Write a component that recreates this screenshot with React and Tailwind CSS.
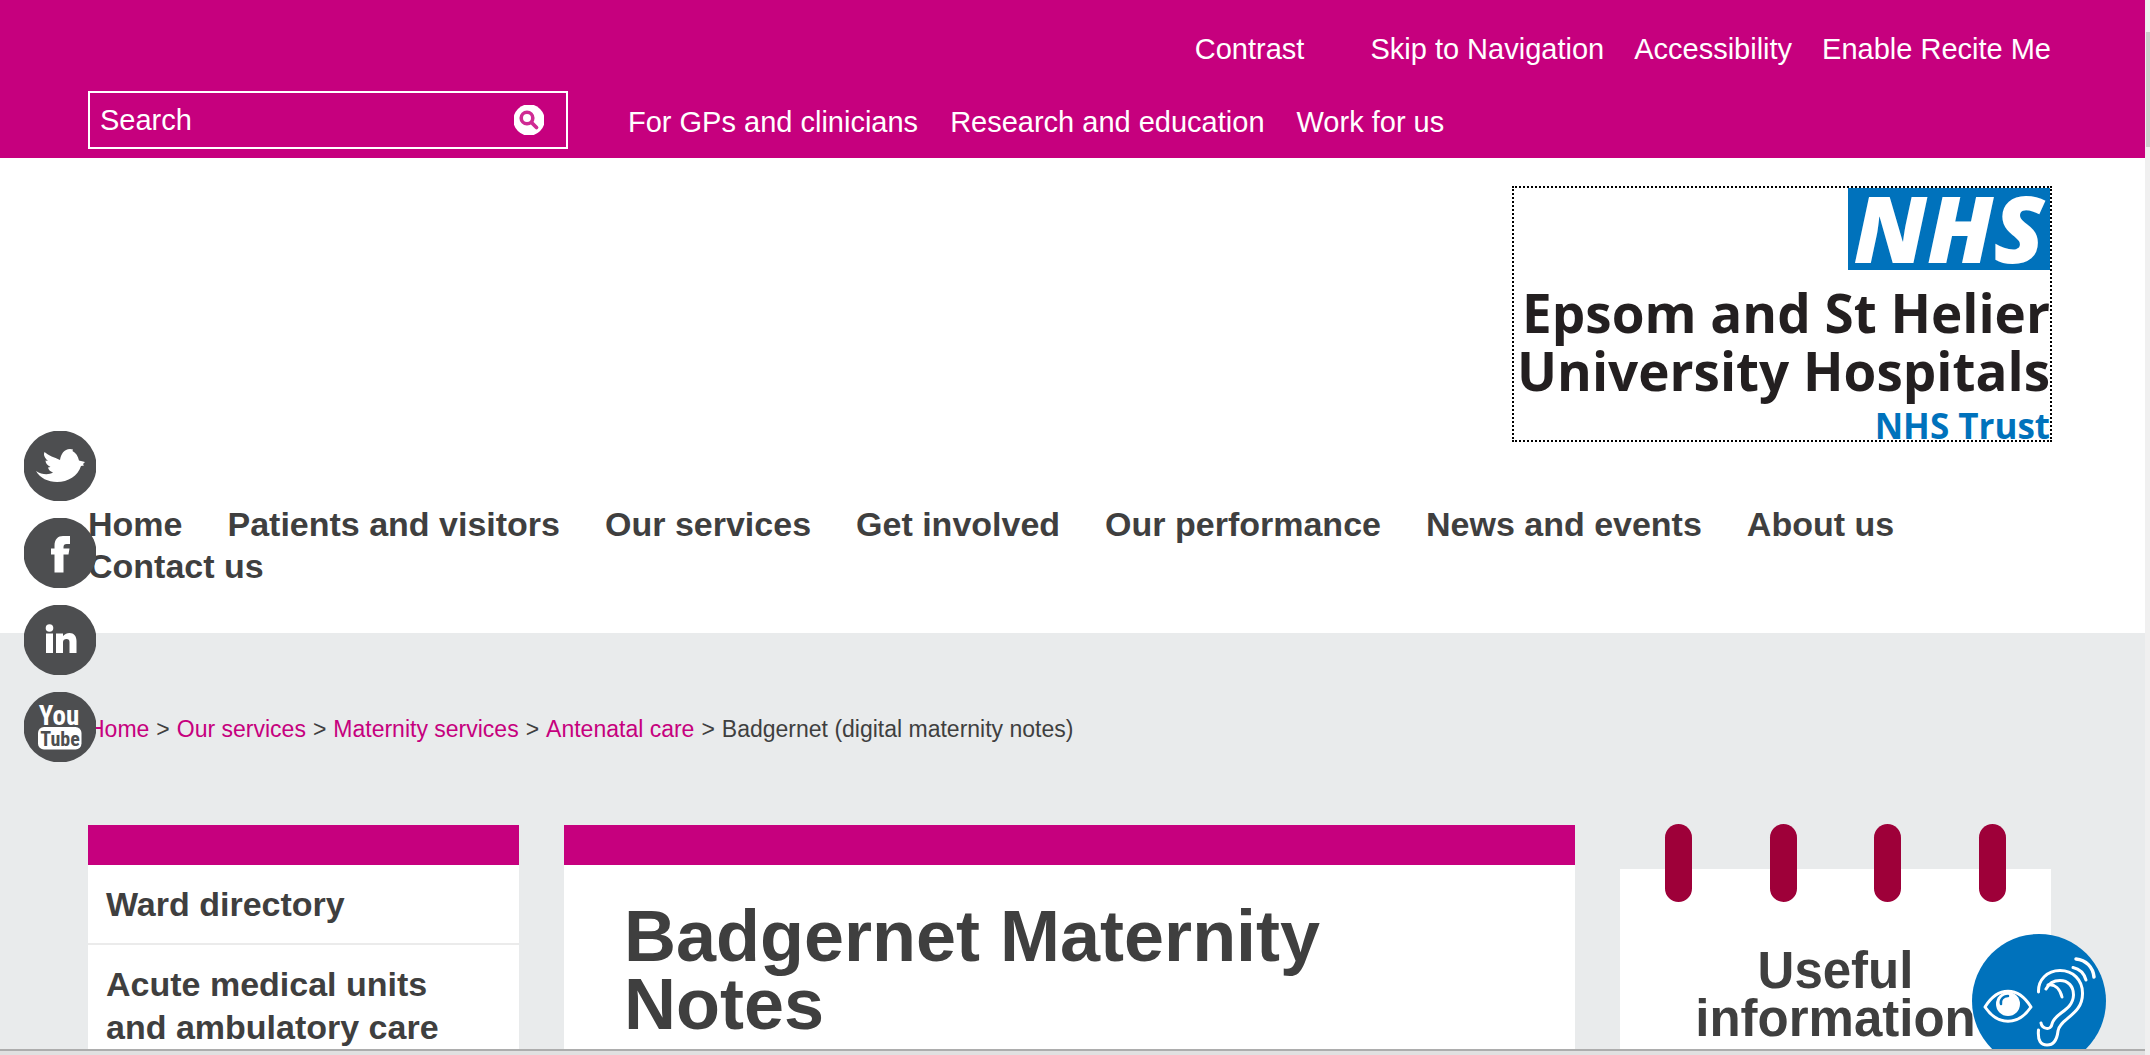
const navItems = [
  "Home",
  "Patients and visitors",
  "Our services",
  "Get involved",
  "Our performance",
  "News and events",
  "About us",
  "Contact us",
];

const crumbs = ["Home", "Our services", "Maternity services", "Antenatal care"];

function SearchIcon() {
  return (
    <svg viewBox="0 0 30 30" className="size-[30px]" aria-hidden="true">
      <circle cx="15" cy="15" r="15.700" fill="#fff" />
      <circle cx="13" cy="13" r="5.800" fill="none" stroke="#cf2a93" strokeWidth="3.600" />
      <path d="M17.500 17.500 L22.500 22.500" stroke="#cf2a93" strokeWidth="3.800" strokeLinecap="round" />
    </svg>
  );
}

function Logo() {
  return (
    <a
      href="#home"
      aria-label="Epsom and St Helier University Hospitals NHS Trust"
      className="flex h-64 w-[540px] flex-col items-end border-2 border-dotted border-black font-['Open_Sans',sans-serif] font-bold whitespace-nowrap text-[#231f20]"
    >
      <span className="flex h-[82px] w-[202px] shrink-0 items-center justify-center bg-[#0072bc] pb-1 text-[93px] leading-[82px] font-extrabold text-white italic">
        NHS
      </span>
      <span className="mt-[14px] text-[53px] leading-[58px]">Epsom and St Helier</span>
      <span className="text-[53px] leading-[58px]">University Hospitals</span>
      <span className="mt-[5px] text-[35px] leading-[42px] text-[#0072bc]">NHS Trust</span>
    </a>
  );
}

function SocialLink({ label, children }) {
  return (
    <a href={"#" + label.toLowerCase()} aria-label={label} className="block">
      <svg viewBox="0 0 72 70" className="h-[70px] w-[72px]" aria-hidden="true">
        <ellipse cx="36" cy="35" rx="36.500" ry="35.500" fill="#4d4e50" />
        {children}
      </svg>
    </a>
  );
}

function Social() {
  return (
    <div className="absolute top-[431px] left-6 flex flex-col gap-[17px]">
      <SocialLink label="Twitter">
        <path
          fill="#fff"
          d="M12 40 C18 44 25 44 29 41.500 C26 40.500 24.500 38.500 24 36.500 L26.500 36 C23 34 21.500 32 21.500 29.500 L24 30 C21 27 19 24 20.500 21 C25 25 30 26 36 29 C37 23 40 18 46 18 L49 18.500 L48.500 20 C52 22 54 25 55 29.500 L61 31 L59 33 L60 34.500 L57 35 C54 45 44 51 33 51 C24 51 16 47 12 40 Z"
        />
      </SocialLink>
      <SocialLink label="Facebook">
        <path
          fill="#fff"
          d="M30.500 54.500 V36.500 H27 V30.500 H30.500 V28 C30.500 21 34 18 39 18 H46 V26 H42.500 C40.500 26 39.500 27 39.500 29 V30.500 H45.500 L44.500 36.500 H39.500 V54.500 Z"
        />
      </SocialLink>
      <SocialLink label="LinkedIn">
        <circle cx="25.500" cy="23" r="3.800" fill="#fff" />
        <path
          fill="#fff"
          d="M22 28.500 H29 V48 H22 Z M32 28.500 H39 V31 C41 29 43 28 45.500 28 C50 28 52.500 31 52.500 36 V48 H45.500 V37 C45.500 35 44.500 34 42.500 34 C40.500 34 39 35 39 37 V48 H32 Z"
        />
      </SocialLink>
      <SocialLink label="YouTube">
        <text x="35" y="33" textAnchor="middle" className="fill-white font-['Liberation_Sans_Narrow','Roboto_Condensed','Roboto',sans-serif] text-[27px] font-bold">You</text>
        <rect x="14" y="35" width="43.500" height="22.500" rx="6" fill="#fff" />
        <text x="36" y="54" textAnchor="middle" className="fill-[#4d4e50] font-['Liberation_Sans_Narrow','Roboto_Condensed','Roboto',sans-serif] text-[20px] font-bold">Tube</text>
      </SocialLink>
    </div>
  );
}

function ReciteButton() {
  return (
    <button type="button" aria-label="Enable Recite Me" className="absolute top-[934px] right-11 size-[134px]">
      <svg viewBox="0 0 134 134" className="size-[134px]" aria-hidden="true">
        <circle cx="67" cy="67" r="67" fill="#0072bc" />
        <g fill="none" stroke="#fff" strokeWidth="3" strokeLinecap="round" strokeLinejoin="round">
          <path d="M13 73 C26 52 46 52 59 73 C46 92 26 92 13 73 Z" />
          <path d="M66.500 58 C66 46 75 36.500 88 36.500 C101 36.500 110.500 46 110.500 59 C111 81 88 84 86 97 C85 106 82 111 75 111 C69 111 65.500 107 66.500 96" />
          <path d="M74 55 C77 49 82 46.500 88 46.500 C96 46.500 101.500 52 101.500 61 C101 77 82 79 80 90 C79 97 70 95 69 89" />
          <path d="M76 51 C83 50 88 55 90 63" />
          <path d="M101 33.500 C108 35 112 39 114 46" />
          <path d="M104 25 C114 26 121 33 122 43" strokeWidth="3.500" />
        </g>
        <circle cx="36" cy="70" r="12" fill="#fff" />
        <path d="M29 70 C28 66 31 62 36 62" fill="none" stroke="#0072bc" strokeWidth="2.500" strokeLinecap="round" />
      </svg>
    </button>
  );
}

export default function App() {
  return (
    <div className="relative flex h-screen overflow-hidden bg-[#e9ebec] font-['Liberation_Sans',Arial,sans-serif] text-[#3f3f3f]">
      <div className="flex min-w-0 flex-1 flex-col">
        <header>
          <div className="flex h-[158px] flex-col justify-between bg-[#c6007e] pt-[31px] pr-[94px] pb-[9px] pl-[88px] text-[29px] leading-9 text-white">
            <nav aria-label="Tools" className="flex justify-end gap-[30px]">
              <a href="#contrast" className="mr-9">Contrast</a>
              <a href="#nav">Skip to Navigation</a>
              <a href="#accessibility">Accessibility</a>
              <a href="#recite">Enable Recite Me</a>
            </nav>
            <div className="flex items-center gap-[60px]">
              <form className="flex h-[58px] w-[480px] items-center border-2 border-white pr-[22px] pl-[10px]">
                <input
                  type="text"
                  aria-label="Search"
                  placeholder="Search"
                  className="min-w-0 flex-1 bg-transparent outline-none placeholder:text-white"
                />
                <button type="button" aria-label="Submit search">
                  <SearchIcon />
                </button>
              </form>
              <nav aria-label="Audiences" className="flex gap-8 pt-1">
                <a href="#gps">For GPs and clinicians</a>
                <a href="#research">Research and education</a>
                <a href="#work">Work for us</a>
              </nav>
            </div>
          </div>
          <div className="flex h-[475px] flex-col bg-white pt-7 pr-[93px] pl-[88px]">
            <div className="flex justify-end">
              <Logo />
            </div>
            <nav id="nav" aria-label="Main" className="mt-[61px] flex flex-wrap gap-x-[45px] text-[34px] leading-[42px] font-bold">
              {navItems.map((item) => (
                <a key={item} href="#nav">{item}</a>
              ))}
            </nav>
          </div>
        </header>

        <main className="flex min-h-0 flex-1 flex-col overflow-hidden pr-[94px] pl-[88px]">
          <nav aria-label="Breadcrumb" className="mt-20 flex gap-x-[7px] text-[23px] leading-8">
            {crumbs.map((crumb) => (
              <span key={crumb} className="flex gap-x-[7px]">
                <a href="#crumb" className="text-[#c6007e]">{crumb}</a>
                <span>&gt;</span>
              </span>
            ))}
            <span>Badgernet (digital maternity notes)</span>
          </nav>

          <div className="mt-20 grid flex-1 grid-cols-[431fr_1011fr_431fr] gap-x-[45px]">
            <aside className="border-t-[40px] border-[#c6007e] bg-white text-[34px] leading-[43px] font-bold">
              <a href="#wards" className="block border-b-2 border-[#ebebeb] px-[18px] pt-[18px] pb-[17px]">Ward directory</a>
              <a href="#acute" className="block pt-[18px] pr-11 pl-[18px]">Acute medical units and ambulatory care</a>
            </aside>
            <article className="border-t-[40px] border-[#c6007e] bg-white px-[60px] pt-[37px]">
              <h1 className="max-w-[800px] text-[72px] leading-[68px] font-bold">Badgernet Maternity Notes</h1>
            </article>
            <aside className="flex flex-col">
              <div className="relative mt-11 flex-1 bg-white px-11 pt-[78px]">
                <div className="absolute inset-x-0 -top-[45px] flex justify-between px-[45px]">
                  {[0, 1, 2, 3].map((ring) => (
                    <span key={ring} className="h-[78px] w-[27px] rounded-full bg-[#9e0039]" />
                  ))}
                </div>
                <h2 className="text-center text-[51px] leading-[48px] font-bold">Useful information</h2>
              </div>
            </aside>
          </div>
        </main>
      </div>

      <div className="w-[5px] bg-[#f0f0f0] pt-8 pl-px">
        <div className="h-[115px] bg-[#cdcdcd]" />
      </div>

      <Social />
      <ReciteButton />
      <div className="absolute right-[5px] bottom-0 left-0 h-[6px] border-t-2 border-[#adadad] bg-[#e0e0e0]" />
    </div>
  );
}
